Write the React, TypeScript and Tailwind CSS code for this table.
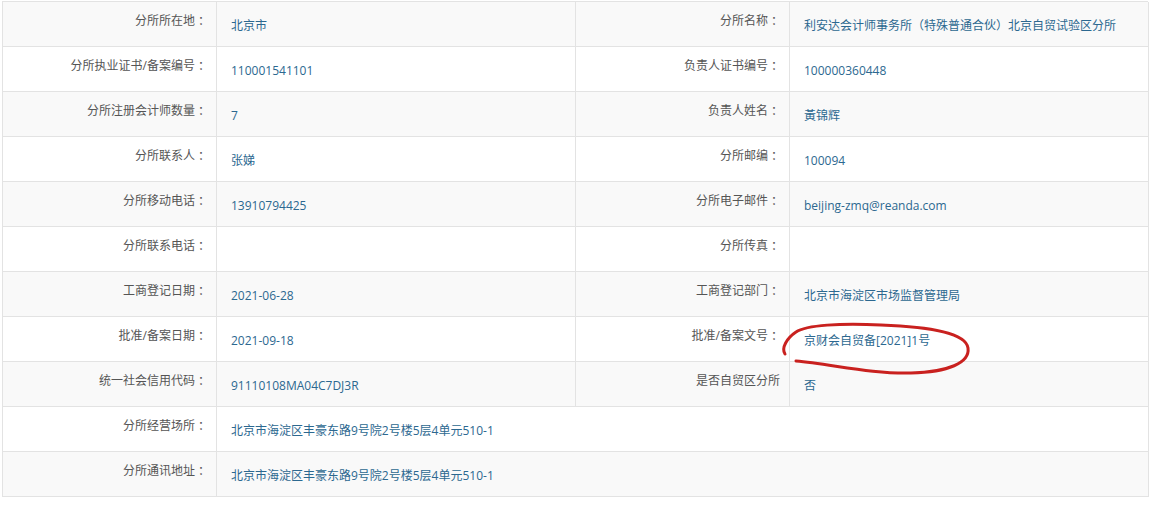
const rows: [string, string, string, string][] = [
  ['分所所在地：', '北京市', '分所名称：', '利安达会计师事务所（特殊普通合伙）北京自贸试验区分所'],
  ['分所执业证书/备案编号：', '110001541101', '负责人证书编号：', '100000360448'],
  ['分所注册会计师数量：', '7', '负责人姓名：', '黃锦辉'],
  ['分所联系人：', '张娣', '分所邮编：', '100094'],
  ['分所移动电话：', '13910794425', '分所电子邮件：', 'beijing-zmq@reanda.com'],
  ['分所联系电话：', '', '分所传真：', ''],
  ['工商登记日期：', '2021-06-28', '工商登记部门：', '北京市海淀区市场监督管理局'],
  ['批准/备案日期：', '2021-09-18', '批准/备案文号：', '京财会自贸备[2021]1号'],
  ['统一社会信用代码：', '91110108MA04C7DJ3R', '是否自贸区分所', '否'],
]

const wide: [string, string][] = [
  ['分所经营场所：', '北京市海淀区丰豪东路9号院2号楼5层4单元510-1'],
  ['分所通讯地址：', '北京市海淀区丰豪东路9号院2号楼5层4单元510-1'],
]

const Label = ({ text, bg }: { text: string; bg: string }) => {
  const colon = text.endsWith('：')
  return (
    <div className={`h-[45px] border-r border-b border-[#e3e3e3] flex items-center justify-end pr-[9px] pb-[7px] text-[#555555] ${bg}`}>
      {colon ? text.slice(0, -1) : text}
      {colon && <span className="font-['Noto_Sans_CJK_JP',sans-serif]">：</span>}
    </div>
  )
}

const Value = ({ text, bg, span, mark }: { text: string; bg: string; span?: boolean; mark?: boolean }) => (
  <div className={`relative h-[45px] border-r border-b border-[#e3e3e3] flex items-center pl-[14px] pt-[4px] text-[#2c6890] ${bg} ${span ? 'col-span-3' : ''}`}>
    {text}
    {mark && (
      <svg className="absolute left-[-10px] top-0 z-10 overflow-visible" width="200" height="60" fill="none">
        <path
          d="M 16 44 C 51 47, 91 57, 131 56 C 168 55, 190 46, 188 31 C 186 16, 151 10, 101 8 C 61 6, 26 8, 16 15 C 7 21, 1 31, 5 37"
          stroke="#c9211f"
          strokeWidth="3"
          strokeLinecap="round"
        />
      </svg>
    )}
  </div>
)

const App = () => {
  return (
    <div className="w-[1151px] h-[509px] bg-white overflow-hidden text-[12px] font-['Open_Sans','Noto_Sans_CJK_SC',sans-serif]">
      <div className="ml-[2px] mt-px w-[1146px] grid grid-cols-[214px_359px_214px_359px] border-l border-t border-[#e3e3e3]">
        {rows.map((r, i) => {
          const bg = i % 2 === 0 ? 'bg-[#f9f9f9]' : 'bg-white'
          return [
            <Label key={i + 'a'} text={r[0]} bg={bg} />,
            <Value key={i + 'b'} text={r[1]} bg={bg} />,
            <Label key={i + 'c'} text={r[2]} bg={bg} />,
            <Value key={i + 'd'} text={r[3]} bg={bg} mark={i === 7} />,
          ]
        })}
        {wide.map((r, i) => {
          const bg = i % 2 === 0 ? 'bg-white' : 'bg-[#f9f9f9]'
          return [
            <Label key={'w' + i + 'a'} text={r[0]} bg={bg} />,
            <Value key={'w' + i + 'b'} text={r[1]} bg={bg} span />,
          ]
        })}
      </div>
    </div>
  )
}

export default App
